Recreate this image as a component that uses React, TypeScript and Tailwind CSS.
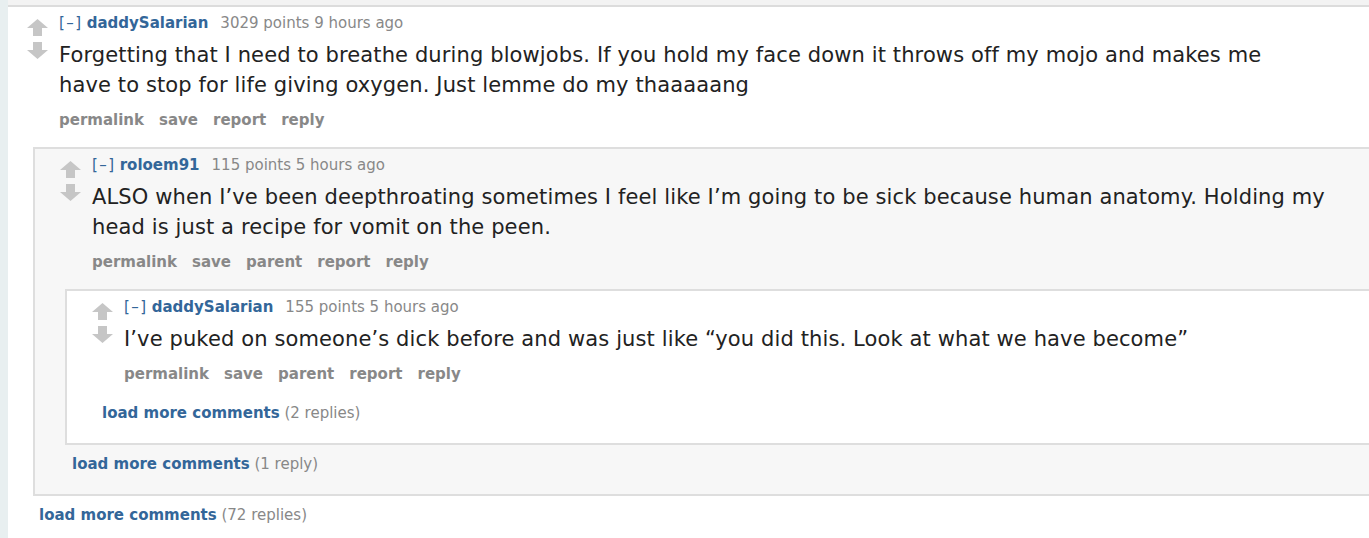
import { ReactNode } from "react";

const Arrows = () => (
  <div className="flex flex-col items-center gap-[6px] w-[21px] pt-[6px] shrink-0">
    <svg width="21" height="17" viewBox="0 0 21 17">
      <polygon points="10.5,0 21,9 15,9 15,17 6,17 6,9 0,9" fill="#c6c6c6" />
    </svg>
    <svg width="21" height="17" viewBox="0 0 21 17">
      <polygon points="6,0 15,0 15,8 21,8 10.5,17 0,8 6,8" fill="#c6c6c6" />
    </svg>
  </div>
);

interface ICommentProps {
  author: string;
  points: string;
  time: string;
  body: ReactNode;
  links: string[];
  children?: ReactNode;
  more?: string;
}

const Comment = ({ author, points, time, body, links, children, more }: ICommentProps) => {
  return (
    <div>
      <div className="flex gap-[11px] pl-[25px]">
        <Arrows />
        <div className="flex flex-col">
          <div className="text-[15px] leading-[20px] text-[#888]">
            <span className="text-[#369] tracking-[1.5px] mr-[4px]">[–]</span>
            <span className="font-bold text-[#369] mr-[12px]">{author}</span>
            {points} {time}
          </div>
          <div className="mt-[7px] text-[21px] leading-[30px] tracking-[0.12px] text-[#222] max-w-[1250px]">
            {body}
          </div>
          <div className="mt-[10px] flex gap-[15px] text-[15px] leading-[20px] font-bold text-[#888]">
            {links.map((l) => (
              <span key={l}>{l}</span>
            ))}
          </div>
        </div>
      </div>
      {children}
      {more && (
        <div className="ml-[37px] text-[15px] leading-[20px]">
          <span className="font-bold text-[#369]">load more comments</span>{" "}
          <span className="text-[#888]">{more}</span>
        </div>
      )}
    </div>
  );
};

const App = () => {
  return (
    <div
      className="w-[1369px] h-[538px] overflow-hidden flex bg-white"
      style={{ fontFamily: "'DejaVu Sans', Verdana, sans-serif" }}
    >
      <div className="w-[8px] shrink-0 bg-[#e8eff0]" />
      <div className="flex-1 flex flex-col">
        <div className="h-[7px] bg-[#f3f3f3] border-b-2 border-[#dcdcdc]" />
        <div className="-ml-[6px] pt-[6px]">
          <Comment
            author="daddySalarian"
            points="3029 points"
            time="9 hours ago"
            body="Forgetting that I need to breathe during blowjobs. If you hold my face down it throws off my mojo and makes me have to stop for life giving oxygen. Just lemme do my thaaaaang"
            links={["permalink", "save", "report", "reply"]}
            more="(72 replies)"
          >
            <div className="ml-[31px] -mr-[20px] mt-[17px] mb-[9px] bg-[#f7f7f7] border-2 border-[#dedede] pt-[6px] pb-[20px]">
              <Comment
                author="roloem91"
                points="115 points"
                time="5 hours ago"
                body="ALSO when I’ve been deepthroating sometimes I feel like I’m going to be sick because human anatomy. Holding my head is just a recipe for vomit on the peen."
                links={["permalink", "save", "parent", "report", "reply"]}
                more="(1 reply)"
              >
                <div className="ml-[30px] mt-[17px] mb-[9px] bg-white border-2 border-[#dedede] pt-[6px] pb-[20px]">
                  <Comment
                    author="daddySalarian"
                    points="155 points"
                    time="5 hours ago"
                    body="I’ve puked on someone’s dick before and was just like “you did this. Look at what we have become”"
                    links={["permalink", "save", "parent", "report", "reply"]}
                  >
                    <div className="h-[19px]" />
                  </Comment>
                  <div className="ml-[35px] text-[15px] leading-[20px]">
                    <span className="font-bold text-[#369]">load more comments</span>{" "}
                    <span className="text-[#888]">(2 replies)</span>
                  </div>
                </div>
              </Comment>
            </div>
          </Comment>
        </div>
      </div>
    </div>
  );
};

export default App;
